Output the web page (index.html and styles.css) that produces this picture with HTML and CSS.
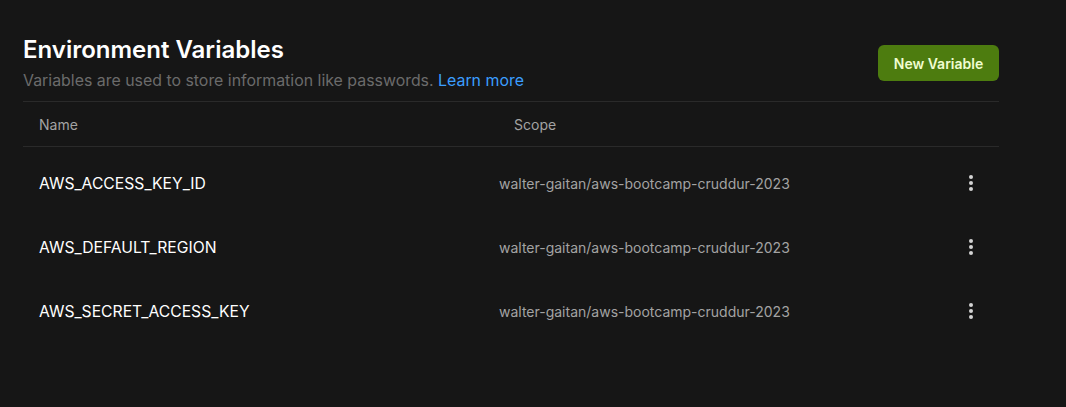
FILE: index.html
```html
<!DOCTYPE html>
<html>
<head>
<meta charset="utf-8">
<link rel="stylesheet" href="styles.css">
</head>
<body>
<div class="page">
  <div class="header">
    <div class="heading">
      <h1 class="title">Environment Variables</h1>
      <p class="subtitle">Variables are used to store information like passwords. <a class="link" href="#">Learn more</a></p>
    </div>
    <button class="btn">New Variable</button>
  </div>
  <div class="table">
    <div class="thead">
      <div class="col-name">Name</div>
      <div class="col-scope">Scope</div>
    </div>
    <div class="tbody">
      <div class="row">
        <div class="name">AWS_ACCESS_KEY_ID</div>
        <div class="scope">walter-gaitan/aws-bootcamp-cruddur-2023</div>
        <div class="menu"><span class="dot"></span><span class="dot"></span><span class="dot"></span></div>
      </div>
      <div class="row">
        <div class="name">AWS_DEFAULT_REGION</div>
        <div class="scope">walter-gaitan/aws-bootcamp-cruddur-2023</div>
        <div class="menu"><span class="dot"></span><span class="dot"></span><span class="dot"></span></div>
      </div>
      <div class="row">
        <div class="name">AWS_SECRET_ACCESS_KEY</div>
        <div class="scope">walter-gaitan/aws-bootcamp-cruddur-2023</div>
        <div class="menu"><span class="dot"></span><span class="dot"></span><span class="dot"></span></div>
      </div>
    </div>
  </div>
</div>
</body>
</html>
```
FILE: styles.css
```css
html, body {
  margin: 0;
  padding: 0;
  background: #161616;
  font-family: Inter, "Noto Sans", sans-serif;
}
.page {
  width: 976px;
  padding: 35px 0 0 23px;
}
.header {
  display: flex;
  justify-content: space-between;
  align-items: flex-start;
  height: 66px;
}
.title {
  margin: 0;
  font-size: 24px;
  line-height: 30px;
  font-weight: 600;
  color: #ffffff;
}
.subtitle {
  margin: 6px 0 0;
  font-size: 15.9px;
  line-height: 20px;
  color: #6b6b6b;
}
.link {
  color: #3b9eff;
  text-decoration: none;
}
.btn {
  margin-top: 10px;
  width: 121px;
  height: 36px;
  border: none;
  border-radius: 6px;
  background: #4d7c0f;
  color: #f0fdd0;
  font-family: inherit;
  font-size: 14px;
  font-weight: 600;
  padding: 0;
}
.table {
  border-top: 1px solid #2a2a2a;
}
.thead {
  display: flex;
  align-items: center;
  height: 44px;
  border-bottom: 1px solid #2a2a2a;
  font-size: 14px;
  color: #a3a3a3;
}
.col-name {
  padding-left: 16px;
  width: 475px;
}
.tbody {
  padding-top: 4px;
}
.row {
  display: flex;
  align-items: center;
  height: 64px;
}
.name {
  padding-left: 16px;
  width: 460px;
  font-size: 15.7px;
  color: #ffffff;
}
.scope {
  flex: 1;
  font-size: 14px;
  color: #a3a3a3;
}
.menu {
  width: 56px;
  display: flex;
  flex-direction: column;
  align-items: center;
  gap: 2px;
}
.dot {
  width: 4px;
  height: 4px;
  border-radius: 50%;
  background: #d4d4d4;
}
```
